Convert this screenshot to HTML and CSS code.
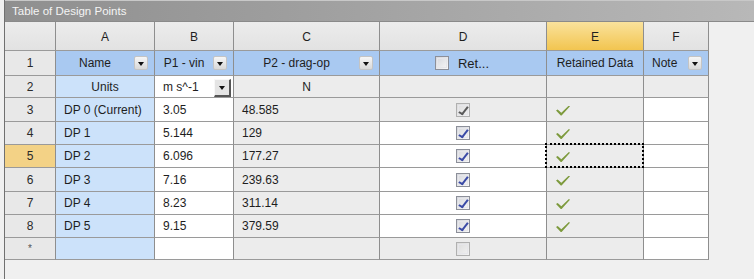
FILE: index.html
```html
<!DOCTYPE html>
<html>
<head>
<meta charset="utf-8">
<link rel="stylesheet" href="styles.css">
</head>
<body>
<div class="panel">
  <div class="titlebar">Table of Design Points</div>
  <div class="grid">
    <!-- header letters -->
    <div class="c hdr"></div>
    <div class="c hdr">A</div>
    <div class="c hdr">B</div>
    <div class="c hdr">C</div>
    <div class="c hdr">D</div>
    <div class="c hdr sel">E</div>
    <div class="c hdr">F</div>

    <!-- row 1 -->
    <div class="c rh">1</div>
    <div class="c r1 dd"><span class="lbl">Name</span><span class="btn"></span></div>
    <div class="c r1 dd"><span class="lbl">P1 - vin</span><span class="btn"></span></div>
    <div class="c r1 dd"><span class="lbl">P2 - drag-op</span><span class="btn"></span></div>
    <div class="c r1 ctr"><span class="cb"></span><span class="ret">Ret...</span></div>
    <div class="c r1 ctr">Retained Data</div>
    <div class="c r1 dd"><span class="lbl lft">Note</span><span class="btn"></span></div>

    <!-- row 2 -->
    <div class="c rh">2</div>
    <div class="c blue ctr">Units</div>
    <div class="c white unit"><span>m s^-1</span><span class="sbtn"></span></div>
    <div class="c gray ctr">N</div>
    <div class="c gray"></div>
    <div class="c gray"></div>
    <div class="c gray"></div>

    <!-- row 3 -->
    <div class="c rh">3</div>
    <div class="c blue">DP 0 (Current)</div>
    <div class="c white">3.05</div>
    <div class="c gray">48.585</div>
    <div class="c gray ctr"><span class="cb on dis"></span></div>
    <div class="c gray"><span class="ok"></span></div>
    <div class="c white"></div>

    <!-- row 4 -->
    <div class="c rh">4</div>
    <div class="c blue">DP 1</div>
    <div class="c white">5.144</div>
    <div class="c gray">129</div>
    <div class="c white ctr"><span class="cb on"></span></div>
    <div class="c gray"><span class="ok"></span></div>
    <div class="c white"></div>

    <!-- row 5 -->
    <div class="c rh cur">5</div>
    <div class="c blue">DP 2</div>
    <div class="c white">6.096</div>
    <div class="c gray">177.27</div>
    <div class="c white ctr"><span class="cb on"></span></div>
    <div class="c gray focus"><span class="ok"></span></div>
    <div class="c white"></div>

    <!-- row 6 -->
    <div class="c rh">6</div>
    <div class="c blue">DP 3</div>
    <div class="c white">7.16</div>
    <div class="c gray">239.63</div>
    <div class="c white ctr"><span class="cb on"></span></div>
    <div class="c gray"><span class="ok"></span></div>
    <div class="c white"></div>

    <!-- row 7 -->
    <div class="c rh">7</div>
    <div class="c blue">DP 4</div>
    <div class="c white">8.23</div>
    <div class="c gray">311.14</div>
    <div class="c white ctr"><span class="cb on"></span></div>
    <div class="c gray"><span class="ok"></span></div>
    <div class="c white"></div>

    <!-- row 8 -->
    <div class="c rh">8</div>
    <div class="c blue">DP 5</div>
    <div class="c white">9.15</div>
    <div class="c gray">379.59</div>
    <div class="c white ctr"><span class="cb on"></span></div>
    <div class="c gray"><span class="ok"></span></div>
    <div class="c white"></div>

    <!-- row * -->
    <div class="c rh star">*</div>
    <div class="c blue"></div>
    <div class="c white"></div>
    <div class="c gray"></div>
    <div class="c gray ctr"><span class="cb dis"></span></div>
    <div class="c gray"></div>
    <div class="c white"></div>
  </div>
</div>
</body>
</html>
```

FILE: styles.css
```css
html, body {
  margin: 0;
  padding: 0;
  background: #f0f0f0;
  font-family: "Liberation Sans", Arial, sans-serif;
  font-size: 12px;
  color: #1e1e1e;
}
.panel {
  margin-left: 4px;
  border-left: 1px solid #707070;
  height: 279px;
}
.titlebar {
  height: 22px;
  box-sizing: border-box;
  padding-left: 7px;
  line-height: 21px;
  font-size: 11.5px;
  color: #f4f4f4;
  background: linear-gradient(to right, #8f8f8f 0%, #9f9f9f 40%, #b8b8b8 100%);
  border-top: 1px solid #c8c8c8;
  border-bottom: 1px solid #8a8a8a;
}
.grid {
  display: grid;
  grid-template-columns: 51px 99px 79px 146px 167px 97px 65px;
  grid-template-rows: 29px 25px 22px 24px 23px 23px 24px 23px 23px 22px;
  width: 704px;
}
.c {
  box-sizing: border-box;
  border-right: 1px solid #8e8e8e;
  border-bottom: 1px solid #9a9a9a;
  display: flex;
  align-items: center;
  padding-left: 8px;
  white-space: nowrap;
  overflow: hidden;
  position: relative;
}
.hdr {
  justify-content: center;
  padding-left: 0;
  background: linear-gradient(#ececec, #e2e2e2);
  padding-top: 2px;
}
.hdr.sel {
  background: linear-gradient(#fae29c, #f2c550);
}
.rh {
  justify-content: center;
  padding-left: 0;
  background: #e8e8e8;
  color: #2a2a2a;
}
.rh.cur {
  background: #f3d286;
}
.rh.star {
  font-size: 10px;
  color: #555;
}
.r1 {
  background: #a9c9f1;
}
.ctr {
  justify-content: center;
  padding-left: 0;
}
.blue { background: #cce2fa; }
.white { background: #ffffff; }
.gray { background: #ececec; }
.dd {
  padding-left: 0;
  padding-right: 6px;
  justify-content: space-between;
}
.dd .lbl {
  flex: 1;
  text-align: center;
}
.dd .lbl.lft {
  text-align: left;
  padding-left: 8px;
  flex: 0 0 auto;
}
.btn {
  width: 14px;
  height: 14px;
  box-sizing: border-box;
  border-radius: 2px;
  background: linear-gradient(#f6f6f6, #d8d8d8);
  border: 1px solid #c4c4c4;
  position: relative;
  flex: 0 0 auto;
}
.btn::after, .sbtn::after {
  content: "";
  position: absolute;
  left: 3px;
  top: 5px;
  border-left: 3.5px solid transparent;
  border-right: 3.5px solid transparent;
  border-top: 4px solid #111;
}
.unit {
  justify-content: space-between;
  padding-right: 2px;
}
.sbtn {
  width: 17px;
  height: 18px;
  box-sizing: border-box;
  background: #e4e4e4;
  border-top: 1px solid #f8f8f8;
  border-left: 1px solid #f8f8f8;
  border-right: 2px solid #555;
  border-bottom: 2px solid #555;
  position: relative;
  margin-top: 2px;
}
.sbtn::after {
  left: 4px;
  top: 6px;
}
.cb {
  width: 14px;
  height: 14px;
  box-sizing: border-box;
  border: 1px solid #8c8f99;
  background: linear-gradient(135deg, #d4d6dc, #f8f8f8);
  position: relative;
  display: inline-block;
  flex: 0 0 auto;
}
.cb::before {
  content: "";
  position: absolute;
  inset: 1px;
  border: 1px solid #e6e6ea;
}
.cb.on::after {
  content: "";
  position: absolute;
  left: 4px;
  top: 1px;
  width: 3px;
  height: 8px;
  border-right: 2px solid #3a4aa6;
  border-bottom: 2px solid #3a4aa6;
  transform: rotate(30deg) skewX(-8deg);
}
.cb.dis {
  border-color: #b0b0b0;
  background: linear-gradient(135deg, #dcdcdc, #f2f2f2);
}
.cb.on.dis::after {
  border-color: #5a5a5a;
}
.ret {
  margin-left: 9px;
  font-size: 13px;
  margin-right: 2px;
}
.ok {
  width: 14px;
  height: 10px;
  margin-left: 1px;
  margin-top: 2px;
  background: #7d9a3d;
  clip-path: polygon(0% 50%, 12% 40%, 38% 72%, 92% 0%, 100% 8%, 40% 100%, 34% 100%);
}
.focus {
  z-index: 1;
  overflow: visible;
}
.focus::after {
  content: "";
  position: absolute;
  left: -2px;
  top: -2px;
  right: -1px;
  bottom: -1px;
  border: 2px dotted #000;
}
```
